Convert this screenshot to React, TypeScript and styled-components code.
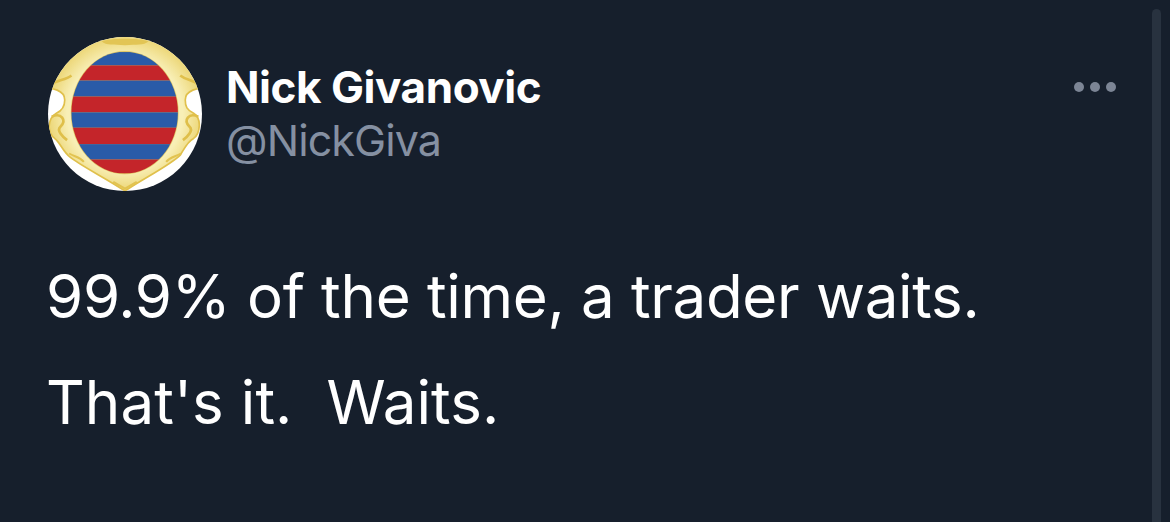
import React from "react";
import styled, { createGlobalStyle } from "styled-components";

const Global = createGlobalStyle`
  html, body { margin: 0; padding: 0; background: #161f2c; }
  #root { width: 1170px; height: 522px; overflow: hidden; }
`;

const Page = styled.main`
  position: relative;
  box-sizing: border-box;
  width: 1170px;
  height: 522px;
  padding: 37px 0 0 48px;
  background: #161f2c;
  font-family: Inter, "Liberation Sans", sans-serif;
  overflow: hidden;
`;

const Header = styled.header`
  display: flex;
  align-items: flex-start;
  gap: 24px;
  height: 154px;
`;

const Avatar = styled.svg`
  flex: none;
  width: 154px;
  height: 154px;
  filter: blur(0.7px);
`;

const Names = styled.div`
  display: flex;
  flex-direction: column;
  padding-top: 25px;
`;

const Name = styled.div`
  font-size: 44px;
  line-height: 50px;
  font-weight: 700;
  letter-spacing: -0.45px;
  color: #ffffff;
`;

const Handle = styled.div`
  font-size: 43px;
  line-height: 56px;
  font-weight: 400;
  letter-spacing: -0.9px;
  color: #8590a2;
`;

const Menu = styled.div`
  position: absolute;
  top: 82px;
  left: 1074px;
  display: flex;
  gap: 6px;
`;

const Dot = styled.span`
  width: 10px;
  height: 10px;
  border-radius: 50%;
  background: #7c8595;
`;

const Scrollbar = styled.div`
  position: absolute;
  top: 9px;
  bottom: 0;
  left: 1152px;
  width: 9px;
  border-radius: 5px 5px 0 0;
  background: #28323f;
`;

const Body = styled.section`
  display: flex;
  flex-direction: column;
  gap: 30px;
  margin-top: 67px;
  margin-left: -2px;
`;

const Line = styled.p<{ $tracking: number }>`
  margin: 0;
  font-size: 60px;
  line-height: 76px;
  font-weight: 400;
  letter-spacing: ${(p) => p.$tracking}px;
  white-space: pre;
  color: #ffffff;
`;

const stripes = [
  ["#2a5ba8", 82, 40],
  ["#c4252a", 122, 45],
  ["#2a5ba8", 167, 48],
  ["#c4252a", 215, 47],
  ["#2a5ba8", 262, 46],
  ["#c4252a", 308, 49],
  ["#2a5ba8", 357, 46],
  ["#c4252a", 403, 42],
] as const;

const Crest = () => (
  <Avatar viewBox="55 37 460 460" aria-label="Nick Givanovic avatar">
    <defs>
      <clipPath id="disc">
        <circle cx="285" cy="267" r="230" />
      </clipPath>
      <clipPath id="oval">
        <ellipse cx="284" cy="263" rx="159" ry="182" />
      </clipPath>
      <radialGradient id="gilt" gradientUnits="userSpaceOnUse" cx="285" cy="265" r="240">
        <stop offset="0.72" stopColor="#f8efb6" />
        <stop offset="1" stopColor="#ead26c" />
      </radialGradient>
    </defs>
    <g clipPath="url(#disc)">
      <rect x="55" y="37" width="460" height="460" fill="#ffffff" />
      <path
        d="M30 20H540V185C500 190 465 195 465 225C465 245 470 255 490 265C515 280 510 325 490 340C470 350 460 375 450 390C420 420 340 460 285 497C230 460 150 420 120 395C100 380 90 350 75 340C50 320 55 280 80 265C100 255 105 240 105 225C105 195 70 190 30 185Z"
        fill="url(#gilt)"
        stroke="#e0c04c"
        strokeWidth="5"
      />
      <path
        d="M215 50C240 40 330 40 355 50C340 64 320 58 285 62C250 58 230 64 215 50Z"
        fill="#e2c555"
      />
      <path
        d="M62 182C80 164 105 168 125 152M508 182C490 164 470 168 450 152"
        fill="none"
        stroke="#e0c04c"
        strokeWidth="8"
      />
      <path
        d="M66 275C95 262 112 285 92 305C80 316 98 335 112 345M504 275C475 262 458 285 478 305C490 316 472 335 458 345"
        fill="none"
        stroke="#dfbf4a"
        strokeWidth="8"
      />
      <path
        d="M118 385C135 395 150 395 162 410M452 385C435 395 420 395 408 410M250 470L285 490L320 470"
        fill="none"
        stroke="#e2c350"
        strokeWidth="6"
      />
      <ellipse cx="284" cy="263" rx="161" ry="184" fill="#dfc665" />
      <g clipPath="url(#oval)">
        {stripes.map(([color, y, height]) => (
          <rect key={y} x="110" y={y} width="350" height={height} fill={color} />
        ))}
      </g>
    </g>
  </Avatar>
);

export default function App() {
  return (
    <>
      <Global />
      <Page>
        <Header>
          <Crest />
          <Names>
            <Name>Nick Givanovic</Name>
            <Handle>@NickGiva</Handle>
          </Names>
        </Header>
        <Menu aria-label="More">
          <Dot />
          <Dot />
          <Dot />
        </Menu>
        <Scrollbar />
        <Body>
          <Line $tracking={-0.3}>99.9% of the time, a trader waits.</Line>
          <Line $tracking={0.1}>That's it.  Waits.</Line>
        </Body>
      </Page>
    </>
  );
}
